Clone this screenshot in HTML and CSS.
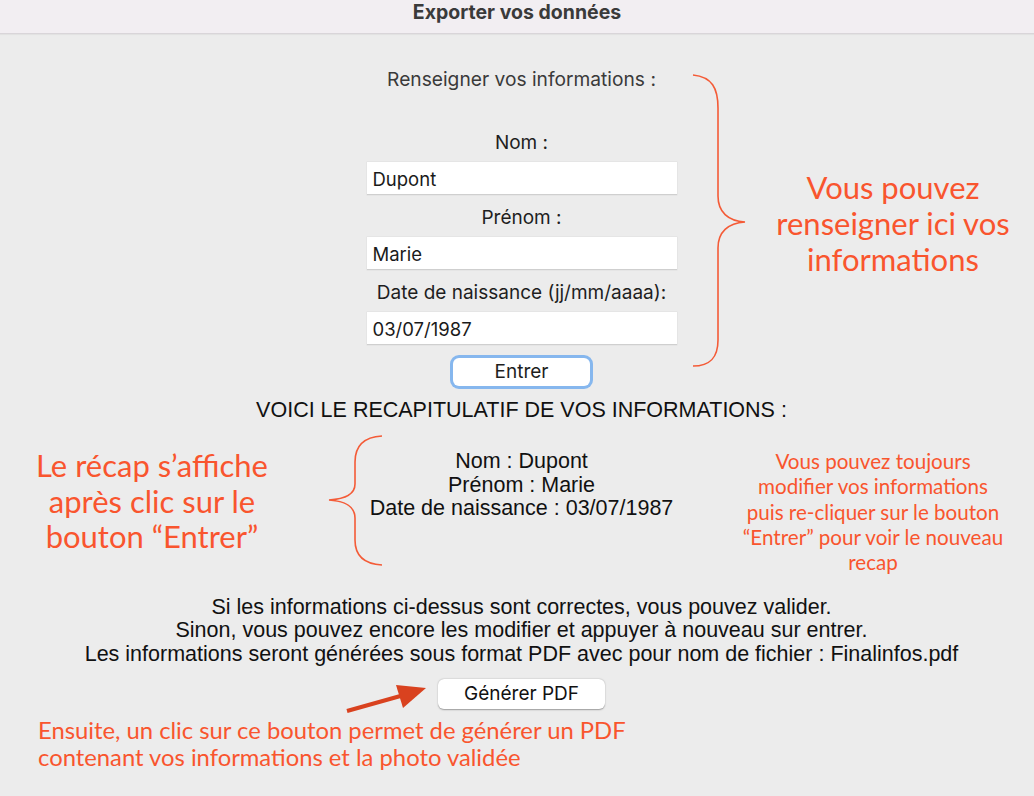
FILE: index.html
```html
<!DOCTYPE html>
<html lang="fr">
<head>
<meta charset="utf-8">
<title>Exporter vos données</title>
<link rel="stylesheet" href="styles.css">
</head>
<body>
<div class="window">
  <header class="titlebar">Exporter vos données</header>
  <main class="content">
    <section class="form">
      <p class="intro">Renseigner vos informations :</p>
      <label class="label label-first">Nom :</label>
      <div class="field">Dupont</div>
      <label class="label">Prénom :</label>
      <div class="field">Marie</div>
      <label class="label">Date de naissance (jj/mm/aaaa):</label>
      <div class="field">03/07/1987</div>
      <button class="btn btn-focus">Entrer</button>
    </section>
    <h2 class="recap-title">VOICI LE RECAPITULATIF DE VOS INFORMATIONS :</h2>
    <div class="recap">
      <div>Nom : Dupont</div>
      <div>Prénom : Marie</div>
      <div>Date de naissance : 03/07/1987</div>
    </div>
    <div class="notice">
      <div>Si les informations ci-dessus sont correctes, vous pouvez valider.</div>
      <div>Sinon, vous pouvez encore les modifier et appuyer à nouveau sur entrer.</div>
      <div>Les informations seront générées sous format PDF avec pour nom de fichier : Finalinfos.pdf</div>
    </div>
    <button class="btn btn-pdf">Générer PDF</button>
  </main>

  <svg class="overlay" width="1034" height="796" viewBox="0 0 1034 796" aria-hidden="true">
    <path class="brace" d="M693 75 C712 77 718 88 718 108 L718 196 C718 212 728 221 745 222 C728 223 718 232 718 248 L718 340 C718 358 710 366 693 366"/>
    <path class="brace" d="M382 436 C364 437 355 446 355 462 L355 484 C355 494 345 499 329 500 C345 501 355 507 355 518 L355 540 C355 556 364 564 382 565"/>
    <line class="arrow-line" x1="347" y1="711" x2="404" y2="695"/>
    <polygon class="arrow-head" points="426,688 396,685 403,708"/>
  </svg>

  <p class="note note-right-big">Vous pouvez<br>renseigner ici vos<br>informations</p>
  <p class="note note-left">Le récap s’affiche<br>après clic sur le<br>bouton “Entrer”</p>
  <p class="note note-right-small">Vous pouvez toujours<br>modifier vos informations<br>puis re-cliquer sur le bouton<br>“Entrer” pour voir le nouveau<br>recap</p>
  <p class="note note-bottom">Ensuite, un clic sur ce bouton permet de générer un PDF<br>contenant vos informations et la photo validée</p>
</div>
</body>
</html>
```

FILE: styles.css
```css
* { box-sizing: border-box; }

html, body {
  margin: 0;
  padding: 0;
  background: #ececec;
}

.window {
  position: relative;
  width: 1034px;
  height: 796px;
  overflow: hidden;
  background: #ececec;
}

.titlebar {
  height: 34px;
  background: #f2eef2;
  border-bottom: 1px solid #d9d5d9;
  box-shadow: 0 1px 1px rgba(0,0,0,0.04);
  text-align: center;
  font-family: Inter, "Noto Sans", sans-serif;
  font-weight: 700;
  font-size: 19.5px;
  line-height: 22px;
  padding-top: 1px;
  color: #3a3a3a;
}

.content {
  display: flex;
  flex-direction: column;
  align-items: center;
  padding-left: 9px;
}

.form {
  display: flex;
  flex-direction: column;
  align-items: center;
  width: 310px;
  font-family: Inter, "Noto Sans", sans-serif;
  color: #262626;
}

.intro {
  margin: 35px 0 0;
  font-size: 19.2px;
  line-height: 20px;
  color: #3a3a3a;
}

.label {
  display: block;
  margin-top: 13px;
  font-size: 19px;
  line-height: 20px;
  color: #1e1e1e;
}

.label-first { margin-top: 44px; }

.field {
  width: 310px;
  height: 33px;
  margin-top: 9px;
  background: #ffffff;
  border-bottom: 1px solid #cfcfcf;
  box-shadow: 0 0 0 0.5px #dedede;
  padding: 6px 6px 0;
  font-size: 18.5px;
  line-height: 22px;
  color: #1a1a1a;
  text-align: left;
}

.btn {
  font-family: Inter, "Noto Sans", sans-serif;
  background: #ffffff;
  border: none;
  border-radius: 6px;
  color: #1e1e1e;
  padding: 0;
}

.btn-focus {
  width: 137px;
  height: 28px;
  margin-top: 13px;
  font-size: 19px;
  line-height: 28px;
  box-shadow: 0 0 0 3px #86b7ee, 0 1px 1px rgba(0,0,0,0.2);
}

.recap-title {
  margin: 13px 0 0;
  font-family: "Liberation Sans", Arial, sans-serif;
  font-weight: 400;
  font-size: 21.5px;
  line-height: 22px;
  color: #111;
}

.recap {
  margin-top: 29px;
  text-align: center;
  font-family: "Liberation Sans", Arial, sans-serif;
  font-size: 21.5px;
  line-height: 23.5px;
  color: #111;
}

.notice {
  margin-top: 75px;
  text-align: center;
  font-family: "Liberation Sans", Arial, sans-serif;
  font-size: 21.5px;
  line-height: 23.5px;
  color: #111;
}

.btn-pdf {
  width: 167px;
  height: 30px;
  margin-top: 13px;
  font-size: 19px;
  line-height: 30px;
  box-shadow: 0 0.5px 1.5px rgba(0,0,0,0.35);
  color: #111;
}

.overlay {
  position: absolute;
  left: 0;
  top: 0;
  pointer-events: none;
}

.brace {
  fill: none;
  stroke: #f45b37;
  stroke-width: 1.6;
}

.arrow-line {
  stroke: #d9421f;
  stroke-width: 4;
}

.arrow-head {
  fill: #d9421f;
}

.note {
  position: absolute;
  margin: 0;
  font-family: Lato, "Noto Sans", sans-serif;
  color: #f9552e;
  text-align: center;
}

.note-right-big {
  left: 753px;
  top: 169px;
  width: 280px;
  font-size: 31px;
  line-height: 36px;
}

.note-left {
  left: 12px;
  top: 448px;
  width: 280px;
  font-size: 31px;
  line-height: 35.5px;
}

.note-right-small {
  left: 728px;
  top: 449px;
  width: 290px;
  font-size: 20.6px;
  line-height: 25.3px;
}

.note-bottom {
  left: 38px;
  top: 717px;
  text-align: left;
  font-size: 23.8px;
  line-height: 27px;
}
```
